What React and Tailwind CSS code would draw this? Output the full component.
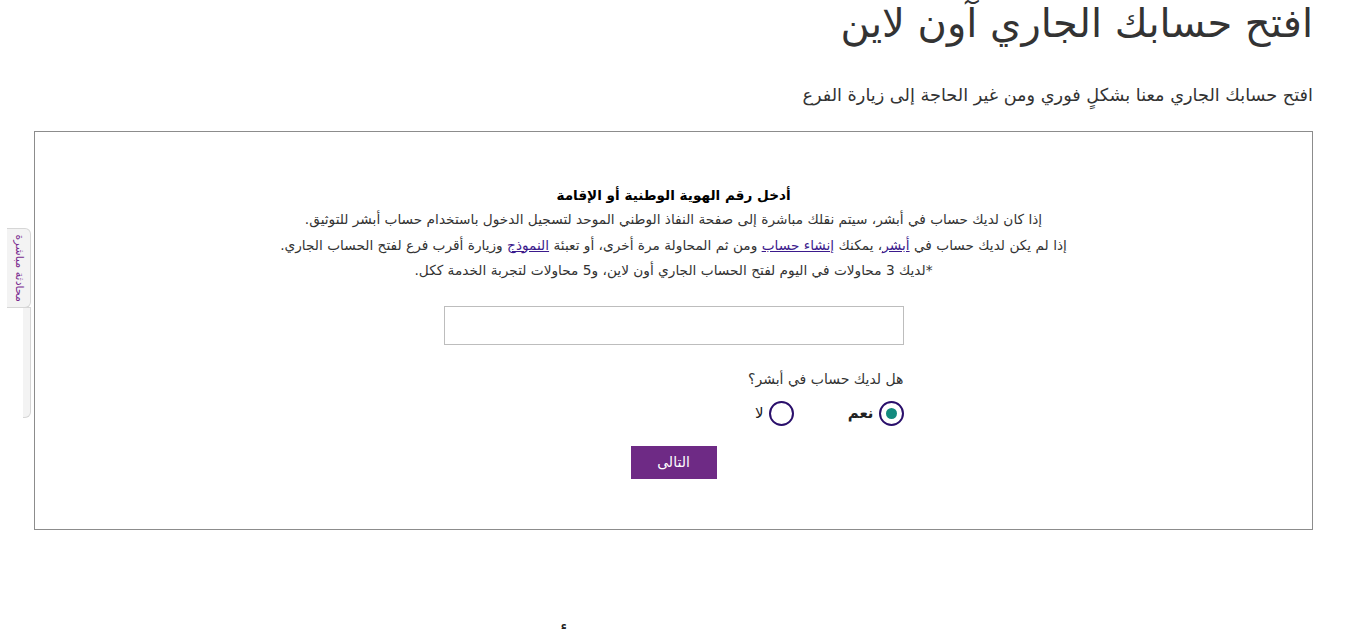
import { useState } from 'react'

function ChatTab() {
  return (
    <div className="absolute left-0 top-[228px] flex flex-col items-start">
      <div className="ml-[7px] flex h-[80px] w-[24px] items-center justify-center rounded-r-[6px] border border-l-0 border-[#d6d6d6] bg-[#f3f3f3]">
        <span className="block rotate-90 whitespace-nowrap text-[11px] text-[#7a2b8f]">محادثة مباشرة</span>
      </div>
      <div className="-mt-px h-[111px] w-[8px] rounded-br-[6px] border border-l-0 border-[#d6d6d6] bg-[#f3f3f3]" />
    </div>
  )
}

function Radio({ checked, label, bold, onClick }) {
  return (
    <button type="button" onClick={onClick} className="flex items-center gap-[5px]">
      <span className="flex h-[25px] w-[25px] items-center justify-center rounded-full border-2 border-[#2a0f6b] bg-white">
        {checked && <span className="h-[11px] w-[11px] rounded-full bg-[#138a7e]" />}
      </span>
      <span className={bold ? 'text-[15px] font-bold text-[#222]' : 'text-[15px] text-[#222]'}>{label}</span>
    </button>
  )
}

export default function App() {
  const [hasAbsher, setHasAbsher] = useState(true)

  return (
    <div dir="rtl" className="relative min-h-screen bg-white font-['DejaVu_Sans',sans-serif] text-[#333]">
      <ChatTab />
      <div className="ml-auto mr-[33px] w-[1279px]">
        <h1 className="text-[40px] leading-[46px] text-[#333]">افتح حسابك الجاري آون لاين</h1>
        <p className="mt-[37px] text-[17.7px] leading-[24px] text-[#333]">افتح حسابك الجاري معنا بشكلٍ فوري ومن غير الحاجة إلى زيارة الفرع</p>

        <div className="mt-[24px] flex h-[399px] flex-col items-center border border-[#8c8c8c] pt-[52px]">
          <h2 className="text-[13.6px] font-bold leading-[22px] text-black">أدخل رقم الهوية الوطنية أو الإقامة</h2>
          <div className="mt-[1px] text-center text-[13.7px] leading-[25.5px] text-[#333]">
            <p>إذا كان لديك حساب في أبشر، سيتم نقلك مباشرة إلى صفحة النفاذ الوطني الموحد لتسجيل الدخول باستخدام حساب أبشر للتوثيق.</p>
            <p>
              إذا لم يكن لديك حساب في <a href="#" className="text-[#3b1a8c] underline">أبشر</a>، يمكنك <a href="#" className="text-[#3b1a8c] underline">إنشاء حساب</a> ومن ثم المحاولة مرة أخرى، أو تعبئة <a href="#" className="text-[#3b1a8c] underline">النموذج</a> وزيارة أقرب فرع لفتح الحساب الجاري.
            </p>
            <p>*لديك 3 محاولات في اليوم لفتح الحساب الجاري أون لاين، و5 محاولات لتجربة الخدمة ككل.</p>
          </div>

          <input type="text" className="mt-[22px] h-[39px] w-[460px] border border-[#bdbdbd] bg-white px-3 text-[14px] outline-none" />

          <div className="mt-[24px] w-[460px]">
            <p className="text-[14px] leading-[20px] text-[#333]">هل لديك حساب في أبشر؟</p>
            <div className="mt-[12px] flex items-center gap-[54px]">
              <Radio checked={hasAbsher} bold label="نعم" onClick={() => setHasAbsher(true)} />
              <Radio checked={!hasAbsher} label="لا" onClick={() => setHasAbsher(false)} />
            </div>
          </div>

          <button type="button" className="mt-[20px] h-[33px] w-[86px] bg-[#6e2a85] text-[14px] text-white">التالى</button>
        </div>

        <div className="mt-[92px] pr-[745px] text-right text-[24px] font-bold text-[#222]">أسئلة شائعة</div>
      </div>
    </div>
  )
}
